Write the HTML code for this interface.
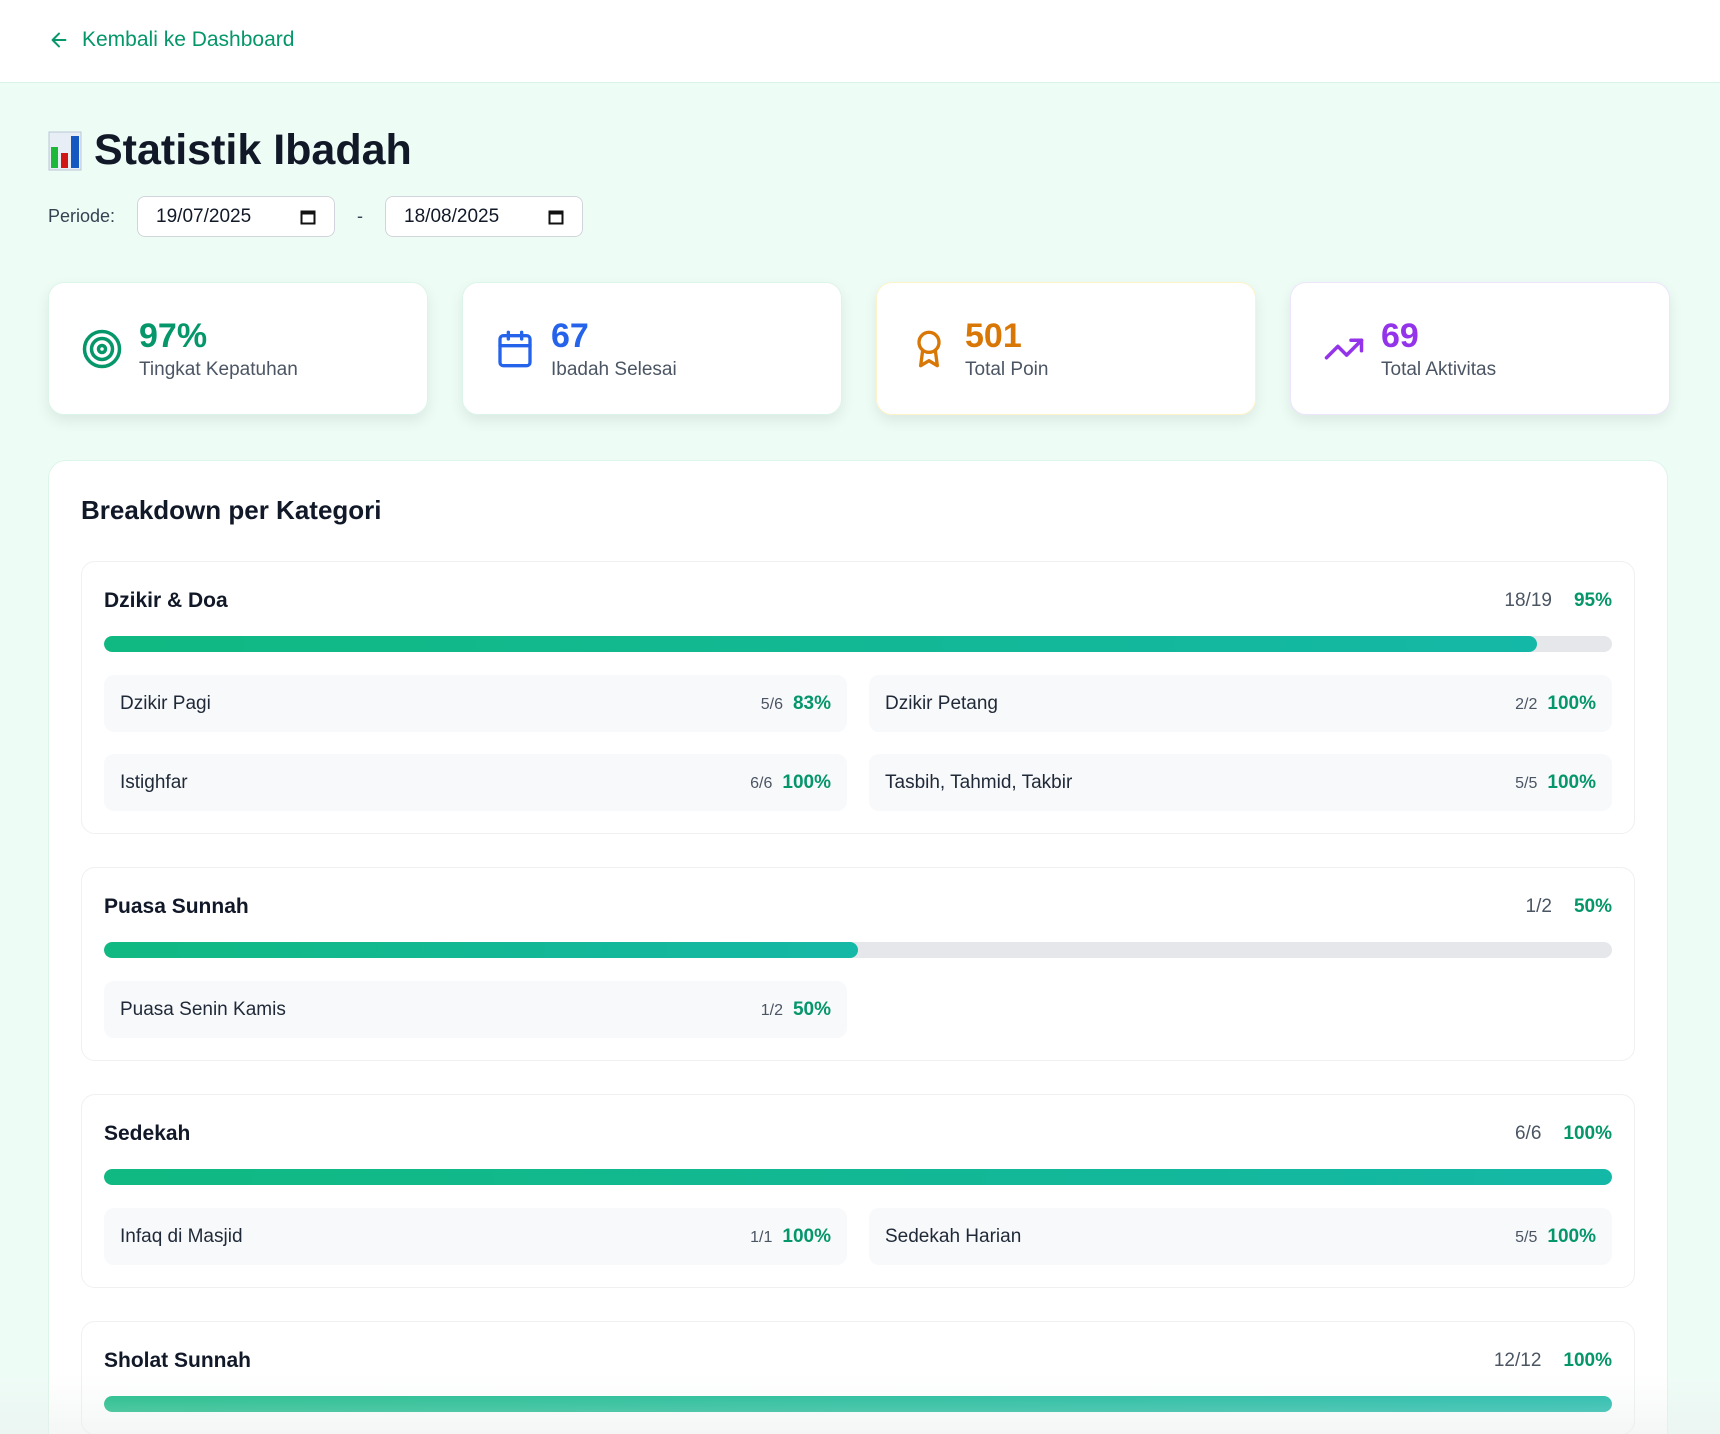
<!DOCTYPE html>
<html style="width:1720px;height:1434px;overflow:hidden"><head><meta charset="utf-8"><style>
*{box-sizing:border-box;margin:0;padding:0}
body{width:1720px;height:1434px;overflow:hidden;background:#eefcf6;font-family:"Liberation Sans",sans-serif;color:#111827;position:relative}
.hdr{height:83px;background:#fff;border-bottom:1px solid #d9f3e8;position:relative}
.back{position:absolute;left:48px;top:28px;color:#059669;font-size:21px;display:flex;align-items:center;gap:12px}
h1{position:absolute;left:48px;top:126px;font-size:43px;font-weight:700;display:flex;align-items:center;gap:12px;color:#111827}
.per{position:absolute;left:48px;top:196px;display:flex;align-items:center;font-size:18px;color:#374151}
.inp{width:198px;height:41px;background:#fff;border:1px solid #d1d5db;border-radius:8px;display:flex;align-items:center;justify-content:space-between;padding:0 18px;font-size:19px;color:#111827}
.cards{position:absolute;left:48px;top:282px;display:flex;gap:34px}
.card{width:380px;height:133px;background:#fff;border-radius:16px;box-shadow:0 6px 14px rgba(0,0,0,.08);border:1px solid #dcf5ea;display:flex;align-items:center;padding-left:32px;gap:16px}
.num{font-size:34px;font-weight:700;line-height:38px}
.lab{font-size:19px;color:#4b5563;margin-top:4px}
.panel{position:absolute;left:48px;top:460px;width:1620px;height:974px;background:#fff;border-radius:18px 18px 0 0;border:1px solid #dcf5ea;border-bottom:none;padding:34px 32px;overflow:hidden}
.panel h2{font-size:26px;font-weight:700;margin-top:0;margin-bottom:36px;line-height:30px}
.cat{border:1px solid #eef0f2;border-radius:14px;padding:22px 22px;margin-bottom:33px}
.ct{display:flex;justify-content:space-between;align-items:center;height:34px}
.ct b{font-size:21px}
.ct span{font-size:19px;color:#4b5563}
.ct span i{font-style:normal;color:#059669;font-weight:700;margin-left:22px}
.bar{height:16px;background:#e5e7eb;border-radius:8px;margin-top:18px;overflow:hidden}
.bar div{height:100%;background:linear-gradient(90deg,#10b981,#14b8a6);border-radius:8px}
.grid{display:grid;grid-template-columns:1fr 1fr;gap:22px;margin-top:23px}
.it{height:57px;background:#f8f9fb;border-radius:10px;display:flex;justify-content:space-between;align-items:center;padding:0 16px;font-size:19px;color:#1f2937}
.it span{font-size:16px;color:#4b5563}
.it span i{font-style:normal;color:#059669;font-weight:700;font-size:19px;margin-left:10px}
.fade{position:absolute;left:0;right:0;bottom:0;height:60px;background:linear-gradient(rgba(255,255,255,0),rgba(232,236,236,.45))}
</style></head><body>
<div class="hdr"><div class="back"><svg width="22" height="22" viewBox="0 0 24 24" fill="none" stroke="#059669" stroke-width="2.2" stroke-linecap="round" stroke-linejoin="round"><path d="M19 12H5M12 19l-7-7 7-7"/></svg>Kembali ke Dashboard</div></div>
<h1><svg width="34" height="40" viewBox="0 0 34 40"><rect x="1" y="1" width="32" height="38" fill="#e8eef5" stroke="#b9c6d4"/><rect x="3" y="16" width="7" height="21" fill="#1db83a"/><rect x="13" y="22" width="7" height="15" fill="#d11414"/><rect x="23" y="5" width="8" height="32" fill="#1557c0"/></svg>Statistik Ibadah</h1>
<div class="per">Periode:<div class="inp" style="margin-left:22px">19/07/2025<svg width="16" height="16" viewBox="0 0 16 16"><rect x="1.5" y="2.5" width="13" height="12" fill="none" stroke="#111" stroke-width="2"/><rect x="1.5" y="2.5" width="13" height="3" fill="#111"/></svg></div><span style="margin:0 22px">-</span><div class="inp">18/08/2025<svg width="16" height="16" viewBox="0 0 16 16"><rect x="1.5" y="2.5" width="13" height="12" fill="none" stroke="#111" stroke-width="2"/><rect x="1.5" y="2.5" width="13" height="3" fill="#111"/></svg></div></div>
<div class="cards">
<div class="card"><svg width="42" height="42" viewBox="0 0 24 24" fill="none" stroke="#059669" stroke-width="2"><circle cx="12" cy="12" r="10"/><circle cx="12" cy="12" r="6"/><circle cx="12" cy="12" r="2"/></svg><div><div class="num" style="color:#059669">97%</div><div class="lab">Tingkat Kepatuhan</div></div></div>
<div class="card"><svg width="40" height="42" viewBox="0 0 24 24" fill="none" stroke="#2563eb" stroke-width="2" stroke-linecap="round"><rect x="3" y="4" width="18" height="18" rx="2"/><path d="M16 2v4M8 2v4M3 10h18"/></svg><div><div class="num" style="color:#2563eb">67</div><div class="lab">Ibadah Selesai</div></div></div>
<div class="card" style="border-color:#fdf3c9"><svg width="40" height="42" viewBox="0 0 24 24" fill="none" stroke="#d97706" stroke-width="2" stroke-linejoin="round"><circle cx="12" cy="8" r="6"/><path d="M8.2 12.9 7 22l5-3 5 3-1.2-9.1"/></svg><div><div class="num" style="color:#d97706">501</div><div class="lab">Total Poin</div></div></div>
<div class="card" style="border-color:#ede5fb"><svg width="42" height="42" viewBox="0 0 24 24" fill="none" stroke="#9333ea" stroke-width="2" stroke-linecap="round" stroke-linejoin="round"><path d="M22 7l-8.5 8.5-5-5L2 17"/><path d="M16 7h6v6"/></svg><div><div class="num" style="color:#9333ea">69</div><div class="lab">Total Aktivitas</div></div></div>
</div>
<div class="panel"><h2>Breakdown per Kategori</h2>
<div class="cat"><div class="ct"><b>Dzikir &amp; Doa</b><span>18/19<i>95%</i></span></div><div class="bar"><div style="width:95%"></div></div>
<div class="grid"><div class="it">Dzikir Pagi<span>5/6<i>83%</i></span></div><div class="it">Dzikir Petang<span>2/2<i>100%</i></span></div><div class="it">Istighfar<span>6/6<i>100%</i></span></div><div class="it">Tasbih, Tahmid, Takbir<span>5/5<i>100%</i></span></div></div></div>
<div class="cat"><div class="ct"><b>Puasa Sunnah</b><span>1/2<i>50%</i></span></div><div class="bar"><div style="width:50%"></div></div>
<div class="grid"><div class="it">Puasa Senin Kamis<span>1/2<i>50%</i></span></div></div></div>
<div class="cat"><div class="ct"><b>Sedekah</b><span>6/6<i>100%</i></span></div><div class="bar"><div style="width:100%"></div></div>
<div class="grid"><div class="it">Infaq di Masjid<span>1/1<i>100%</i></span></div><div class="it">Sedekah Harian<span>5/5<i>100%</i></span></div></div></div>
<div class="cat"><div class="ct"><b>Sholat Sunnah</b><span>12/12<i>100%</i></span></div><div class="bar"><div style="width:100%"></div></div></div>
</div>
<div class="fade"></div>
</body></html>
